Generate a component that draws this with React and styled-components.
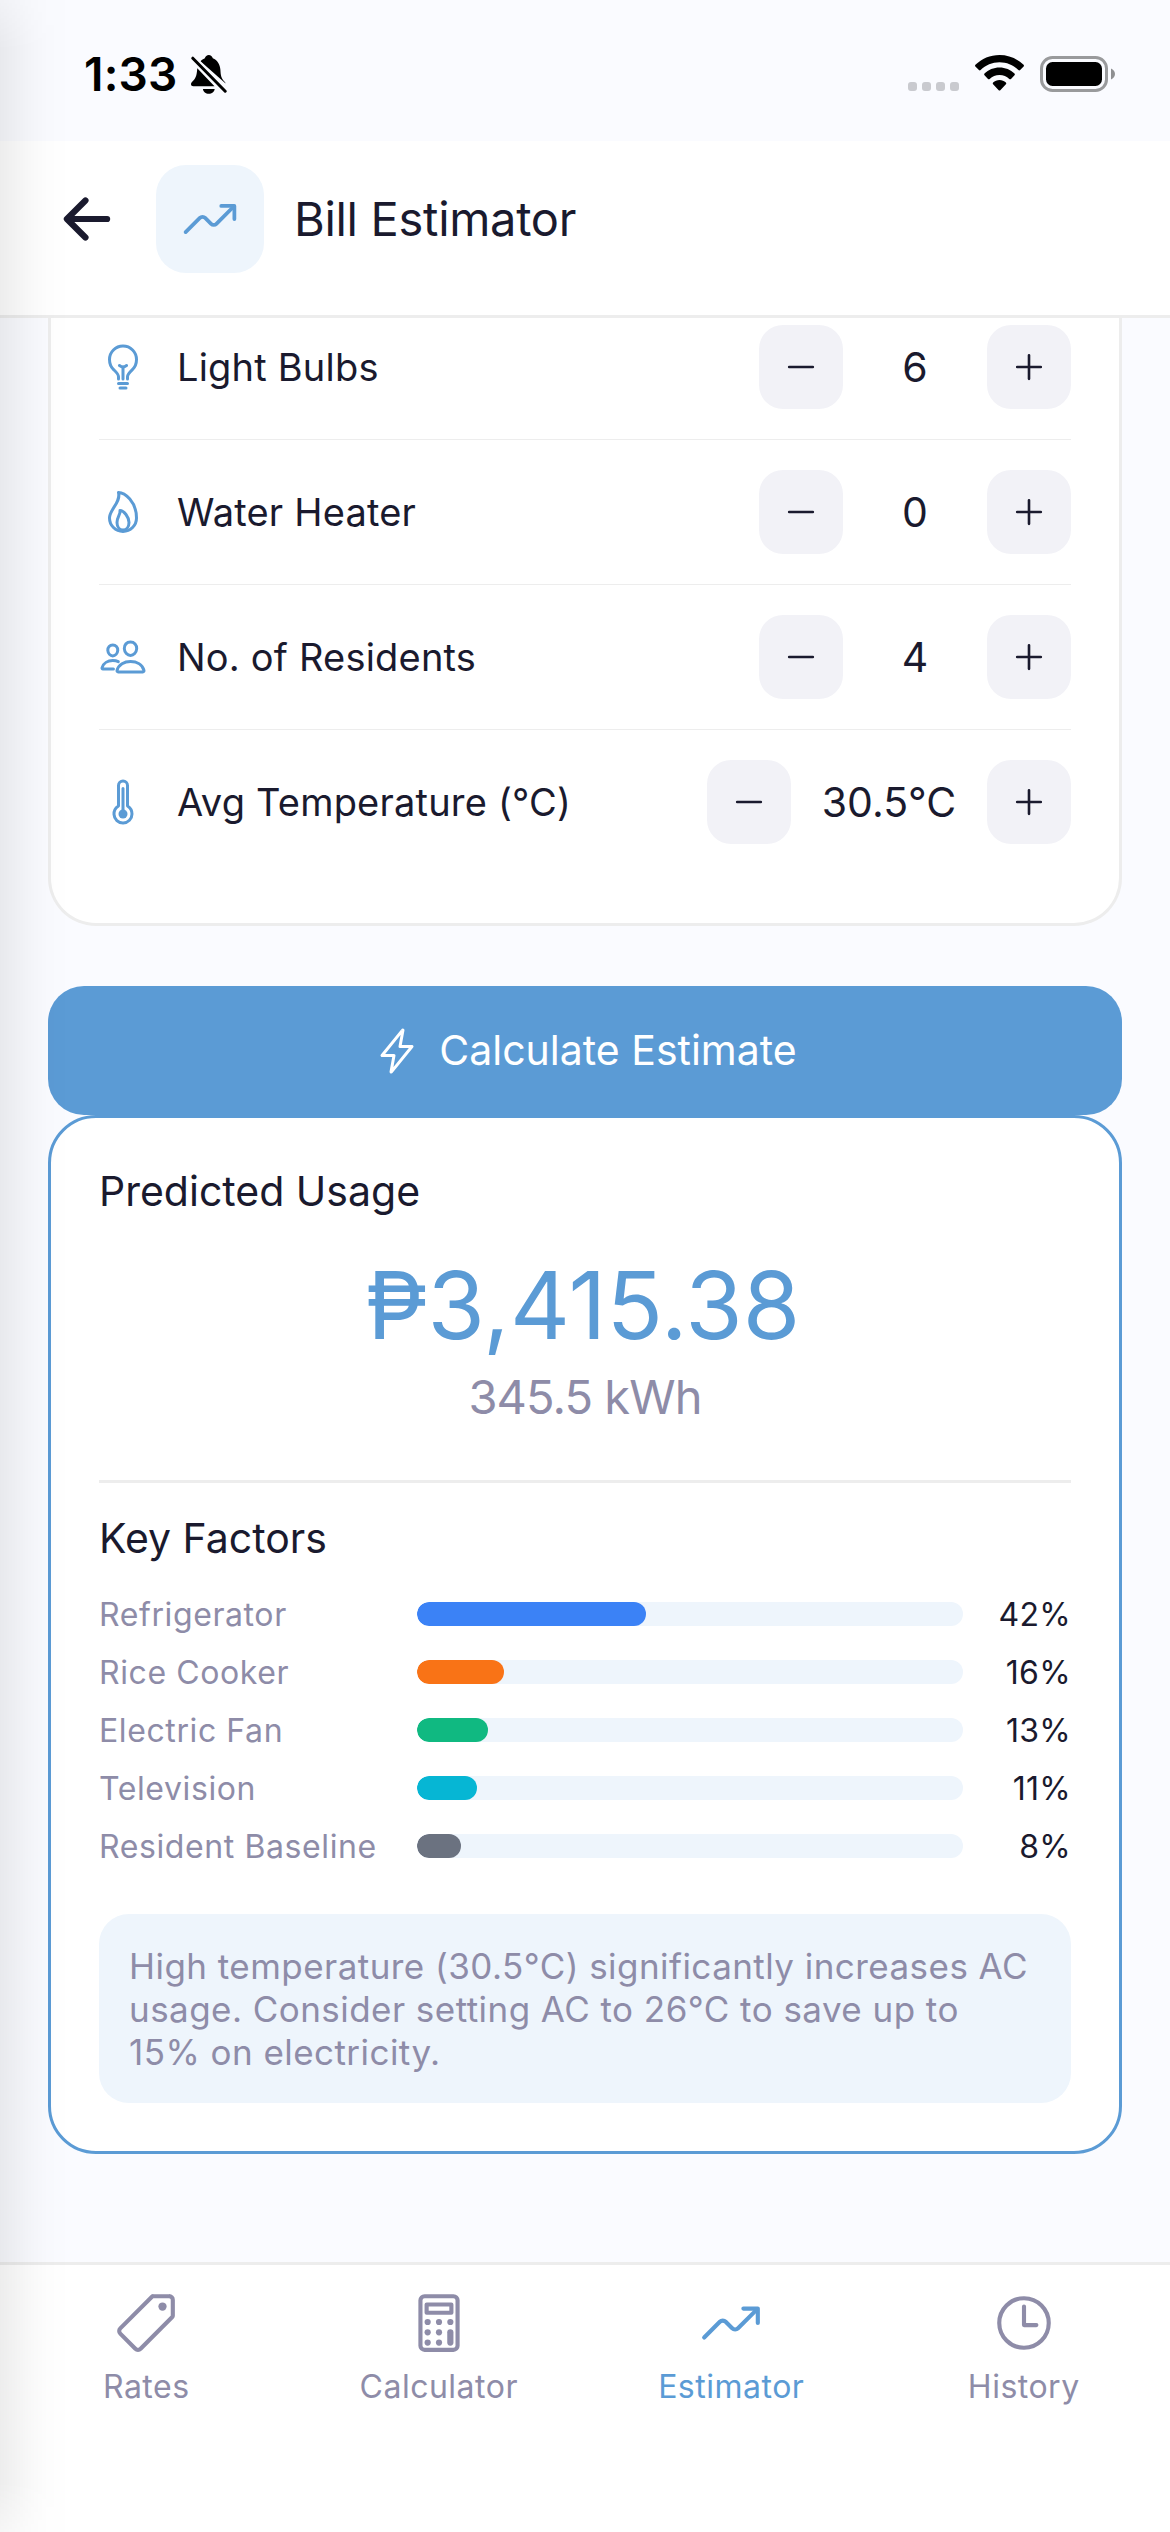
import React from "react";
import styled, { createGlobalStyle } from "styled-components";
import {
    IoAdd,
    IoArrowBack,
    IoBulbOutline,
    IoCalculatorOutline,
    IoFlameOutline,
    IoFlashOutline,
    IoPeopleOutline,
    IoPricetagOutline,
    IoRemove,
    IoThermometerOutline,
    IoTimeOutline,
    IoTrendingUpOutline,
} from "react-icons/io5";

const appliances = [
    { label: 'Light Bulbs', value: '6', icon: IoBulbOutline },
    { label: 'Water Heater', value: '0', icon: IoFlameOutline },
    { label: 'No. of Residents', value: '4', icon: IoPeopleOutline },
    { label: 'Avg Temperature (°C)', value: '30.5°C', icon: IoThermometerOutline, wide: true },
]

const factors = [
    { label: 'Refrigerator', percent: 42, color: '#3b82f6' },
    { label: 'Rice Cooker', percent: 16, color: '#f97316' },
    { label: 'Electric Fan', percent: 13, color: '#10b981' },
    { label: 'Television', percent: 11, color: '#06b6d4' },
    { label: 'Resident Baseline', percent: 8, color: '#6b7280' },
]

const tabs = [
    { label: 'Rates', icon: IoPricetagOutline },
    { label: 'Calculator', icon: IoCalculatorOutline },
    { label: 'Estimator', icon: IoTrendingUpOutline, active: true },
    { label: 'History', icon: IoTimeOutline },
]

export default function App() {
    return (
        <>
            <GlobalStyle />
            <Screen>
                <StatusBar />

                <Header>
                    <BackButton aria-label="Back"><IoArrowBack size={66} /></BackButton>
                    <HeaderIcon><IoTrendingUpOutline size={60} /></HeaderIcon>
                    <HeaderTitle>Bill Estimator</HeaderTitle>
                </Header>

                <Content>
                    <ApplianceCard>
                        <ApplianceList>
                            {appliances.map(({ label, value, icon: Icon, wide }) => (
                                <ApplianceRow key={label}>
                                    <Icon size={48} />
                                    <ApplianceLabel>{label}</ApplianceLabel>
                                    <Stepper>
                                        <StepButton aria-label="Decrease"><IoRemove size={42} /></StepButton>
                                        <StepValue $wide={wide}>{value}</StepValue>
                                        <StepButton aria-label="Increase"><IoAdd size={42} /></StepButton>
                                    </Stepper>
                                </ApplianceRow>
                            ))}
                        </ApplianceList>
                    </ApplianceCard>

                    <CalculateButton>
                        <IoFlashOutline size={48} />
                        <span>Calculate Estimate</span>
                    </CalculateButton>

                    <ResultCard>
                        <SectionTitle>Predicted Usage</SectionTitle>
                        <Amount>₱3,415.38</Amount>
                        <Usage>345.5 kWh</Usage>
                        <Divider />
                        <SectionTitle>Key Factors</SectionTitle>
                        <FactorList>
                            {factors.map(({ label, percent, color }) => (
                                <FactorRow key={label}>
                                    <FactorLabel>{label}</FactorLabel>
                                    <Track>
                                        <Fill $color={color} style={{ width: `${percent}%` }} />
                                    </Track>
                                    <FactorPercent>{percent}%</FactorPercent>
                                </FactorRow>
                            ))}
                        </FactorList>
                        <Tip>
                            High temperature (30.5°C) significantly increases AC usage. Consider setting AC to 26°C to save up to 15% on electricity.
                        </Tip>
                    </ResultCard>
                </Content>

                <TabBar>
                    {tabs.map(({ label, icon: Icon, active }) => (
                        <Tab key={label} $active={active}>
                            <Icon size={66} />
                            <TabLabel>{label}</TabLabel>
                        </Tab>
                    ))}
                </TabBar>

                <EdgeShadow />
            </Screen>
        </>
    );
}

function StatusBar() {
    return (
        <StatusWrapper>
            <StatusGroup>
                <Clock>1:33</Clock>
                <svg width="36" height="40" viewBox="0 0 36 40">
                    <path d="M9.5 6.3C11.200 4.600 13 3.700 13.800 3.300 14.300 1.300 15.900 0 17.800 0s3.500 1.300 4 3.300c4.600 1.900 7.200 6 7.600 11.500.3 6 .9 8.700 4.200 11.900.7.700 1 1.200 1 1.900z" />
                    <path d="M6.300 13.200 23.500 31.200H2.300C.9 31.200 0 30.400 0 29.200c0-1.500 1.300-2.500 2.600-3.900 2.600-2.800 3.200-6.200 3.700-12.100z" />
                    <path d="M11.900 33.900h11.800c-.4 2.700-2.800 4.900-5.900 4.900s-5.500-2.200-5.900-4.900z" />
                    <path d="M1.600 3 34.400 36.800" stroke="#fafbff" strokeWidth="6.400" />
                    <path d="M1.800 3.200 34.200 36.200" stroke="#000" strokeWidth="3" strokeLinecap="round" />
                </svg>
            </StatusGroup>
            <StatusGroup>
                <SignalDots>
                    <i /><i /><i /><i />
                </SignalDots>
                <svg width="49" height="36" viewBox="0 0 49 36">
                    <path d="M24.500 0C33.800 0 42.300 3.700 48.600 9.800c.5.500.5 1.200 0 1.700l-3.500 3.500c-.5.500-1.200.5-1.700 0C38.400 10.200 31.800 7.300 24.500 7.300S10.600 10.200 5.600 15c-.5.500-1.200.5-1.700 0L.4 11.500c-.5-.5-.5-1.200 0-1.700C6.700 3.700 15.200 0 24.500 0z" />
                    <path d="M24.500 12.600c5.800 0 11.100 2.300 15 6 .5.500.5 1.200 0 1.700L36 23.900c-.5.500-1.200.5-1.700 0-2.600-2.400-6-3.900-9.800-3.900s-7.200 1.500-9.800 3.900c-.5.500-1.200.5-1.700 0l-3.500-3.600c-.5-.5-.5-1.200 0-1.700 3.900-3.700 9.200-6 15-6z" />
                    <path d="M24.500 25.100c2.500 0 4.700.9 6.400 2.400.5.500.5 1.200 0 1.700l-5.600 6c-.5.500-1.100.5-1.600 0l-5.600-6c-.5-.5-.5-1.200 0-1.700 1.700-1.500 3.900-2.400 6.400-2.400z" />
                </svg>
                <svg width="75" height="36" viewBox="0 0 75 36">
                    <rect x="1.500" y="1.500" width="65" height="33" rx="11" fill="none" stroke="#999a9c" strokeWidth="3" />
                    <rect x="6" y="6" width="56" height="24" rx="6.500" />
                    <path d="M71 12.500c2.400.9 4 3 4 5.500s-1.600 4.600-4 5.500z" fill="#8f9092" />
                </svg>
            </StatusGroup>
        </StatusWrapper>
    )
}


const GlobalStyle = createGlobalStyle`
  * {
    box-sizing: border-box;
  }
  body {
    margin: 0;
    background: #fafbff;
  }
  button {
    border: 0;
    padding: 0;
    font: inherit;
    color: inherit;
    background: none;
  }
`;

const Screen = styled.div`
  position: relative;
  display: flex;
  flex-direction: column;
  width: 1170px;
  height: 2532px;
  overflow: hidden;
  background: #fafbff;
  color: #1a1a2e;
  font-family: Inter, "Liberation Sans", sans-serif;
  font-weight: 400;

  svg {
    display: block;
    flex-shrink: 0;
  }
`;

const StatusWrapper = styled.div`
  display: flex;
  justify-content: space-between;
  height: 141px;
  padding: 55px 55px 0 84px;
  color: #000;
`;

const StatusGroup = styled.div`
  display: flex;
  align-items: flex-start;
  height: 40px;

  svg + svg {
    margin: 1px 0 0 16px;
  }
`;

const Clock = styled.span`
  width: 107px;
  font-size: 46px;
  font-weight: 600;
  letter-spacing: 0.2px;
  line-height: 39px;
`;

const SignalDots = styled.div`
  display: flex;
  gap: 5px;
  margin: 27px 16px 0 0;

  i {
    width: 9px;
    height: 9px;
    border-radius: 3px;
    background: #c9cacf;
  }
`;

const Header = styled.header`
  display: flex;
  align-items: center;
  flex-shrink: 0;
  height: 177px;
  padding: 0 54px 18px;
  border-bottom: 3px solid #ededed;
  background: #fff;
`;

const BackButton = styled.button`
  margin-right: 36px;
`;

const HeaderIcon = styled.div`
  display: flex;
  align-items: center;
  justify-content: center;
  width: 108px;
  height: 108px;
  margin-right: 30px;
  border-radius: 30px;
  background: #eef5fc;
  color: #5b9bd5;
`;

const HeaderTitle = styled.h1`
  margin: 0;
  padding-bottom: 2px;
  font-size: 47px;
  font-weight: 400;
  letter-spacing: -0.3px;
`;

const Content = styled.main`
  flex: 1;
  min-height: 0;
  padding: 0 48px;
  overflow: hidden;
`;

const ApplianceCard = styled.section`
  height: 608px;
  padding: 0 48px;
  overflow: hidden;
  border: 3px solid #ededed;
  border-top: 0;
  border-radius: 0 0 48px 48px;
  background: #fff;
`;

/* the list is scrolled a little under the header */
const ApplianceList = styled.div`
  margin-top: -23px;
`;

const ApplianceRow = styled.div`
  display: flex;
  align-items: center;
  height: 145px;
  border-bottom: 1px solid #ededed;
  color: #5b9bd5;

  &:last-child {
    border-bottom-color: transparent;
  }
`;

const ApplianceLabel = styled.span`
  flex: 1;
  margin-left: 30px;
  color: #1a1a2e;
  font-size: 38px;
  letter-spacing: 0.2px;
  white-space: nowrap;
`;

const Stepper = styled.div`
  display: flex;
  align-items: center;
  gap: 30px;
  color: #1a1a2e;
`;

const StepButton = styled.button`
  display: flex;
  align-items: center;
  justify-content: center;
  width: 84px;
  height: 84px;
  border-radius: 24px;
  background: #f2f2f7;
`;

const StepValue = styled.span`
  width: ${({ $wide }) => ($wide ? '136px' : '84px')};
  font-size: 41px;
  text-align: center;
  white-space: nowrap;
`;

const CalculateButton = styled.button`
  display: flex;
  align-items: center;
  justify-content: center;
  gap: 18px;
  width: 100%;
  height: 129px;
  margin-top: 60px;
  border-radius: 36px;
  background: #5b9bd5;
  color: #fff;
  font-size: 41px;

  span {
    padding-bottom: 2px;
  }
`;

const ResultCard = styled.section`
  height: 1039px;
  padding: 48px;
  border: 3px solid #5b9bd5;
  border-radius: 48px;
  background: #fff;
`;

const SectionTitle = styled.h2`
  margin: 0;
  font-size: 41px;
  font-weight: 400;
  line-height: 51px;
`;

const Amount = styled.div`
  margin-top: 31px;
  padding-right: 4px;
  color: #5b9bd5;
  font-size: 93px;
  letter-spacing: 0.2px;
  line-height: 114px;
  text-align: center;
`;

const Usage = styled.div`
  margin-top: 6px;
  color: #8e8ca8;
  font-size: 47px;
  letter-spacing: -0.9px;
  line-height: 58px;
  text-align: center;
`;

const Divider = styled.hr`
  height: 3px;
  margin: 54px 0 30px;
  border: 0;
  background: #ededed;
`;

const FactorList = styled.div`
  display: flex;
  flex-direction: column;
  gap: 18px;
  margin: 30px 0 48px;
`;

const FactorRow = styled.div`
  display: grid;
  grid-template-columns: 318px 546px 1fr;
  align-items: center;
  height: 40px;
  font-size: 32px;
`;

const FactorLabel = styled.span`
  color: #8e8ca8;
  letter-spacing: 0.6px;
  white-space: nowrap;
`;

const Track = styled.div`
  height: 24px;
  overflow: hidden;
  border-radius: 12px;
  background: #eef5fc;
`;

const Fill = styled.div`
  height: 100%;
  border-radius: 12px;
  background: ${({ $color }) => $color};
`;

const FactorPercent = styled.span`
  letter-spacing: 0.3px;
  text-align: right;
`;

const Tip = styled.p`
  margin: 0;
  padding: 31px 38px 29px 30px;
  border-radius: 30px;
  background: #eef5fc;
  color: #8e8ca8;
  font-size: 35px;
  letter-spacing: 0.45px;
  line-height: 43px;
`;

const TabBar = styled.nav`
  display: grid;
  grid-template-columns: repeat(4, 1fr);
  flex-shrink: 0;
  height: 270px;
  padding-top: 25px;
  border-top: 3px solid #ededed;
  background: #fff;
`;

const Tab = styled.div`
  display: flex;
  flex-direction: column;
  align-items: center;
  gap: 11px;
  color: ${({ $active }) => ($active ? '#5b9bd5' : '#8e8ca8')};
`;

const TabLabel = styled.span`
  font-size: 32px;
  letter-spacing: 0.5px;
  line-height: 40px;
`;

/* soft shadow along the left edge of the screen */
const EdgeShadow = styled.div`
  position: absolute;
  top: 0;
  bottom: 0;
  left: 0;
  width: 70px;
  pointer-events: none;
  background: linear-gradient(
    to right,
    rgba(0, 0, 0, 0.07) 0,
    rgba(0, 0, 0, 0.047) 16px,
    rgba(0, 0, 0, 0.024) 32px,
    rgba(0, 0, 0, 0.008) 48px,
    rgba(0, 0, 0, 0) 70px
  );
  mask-image: linear-gradient(to bottom, rgba(0, 0, 0, 0.5), #000 50px, #000 2482px, rgba(0, 0, 0, 0.5));
`;
